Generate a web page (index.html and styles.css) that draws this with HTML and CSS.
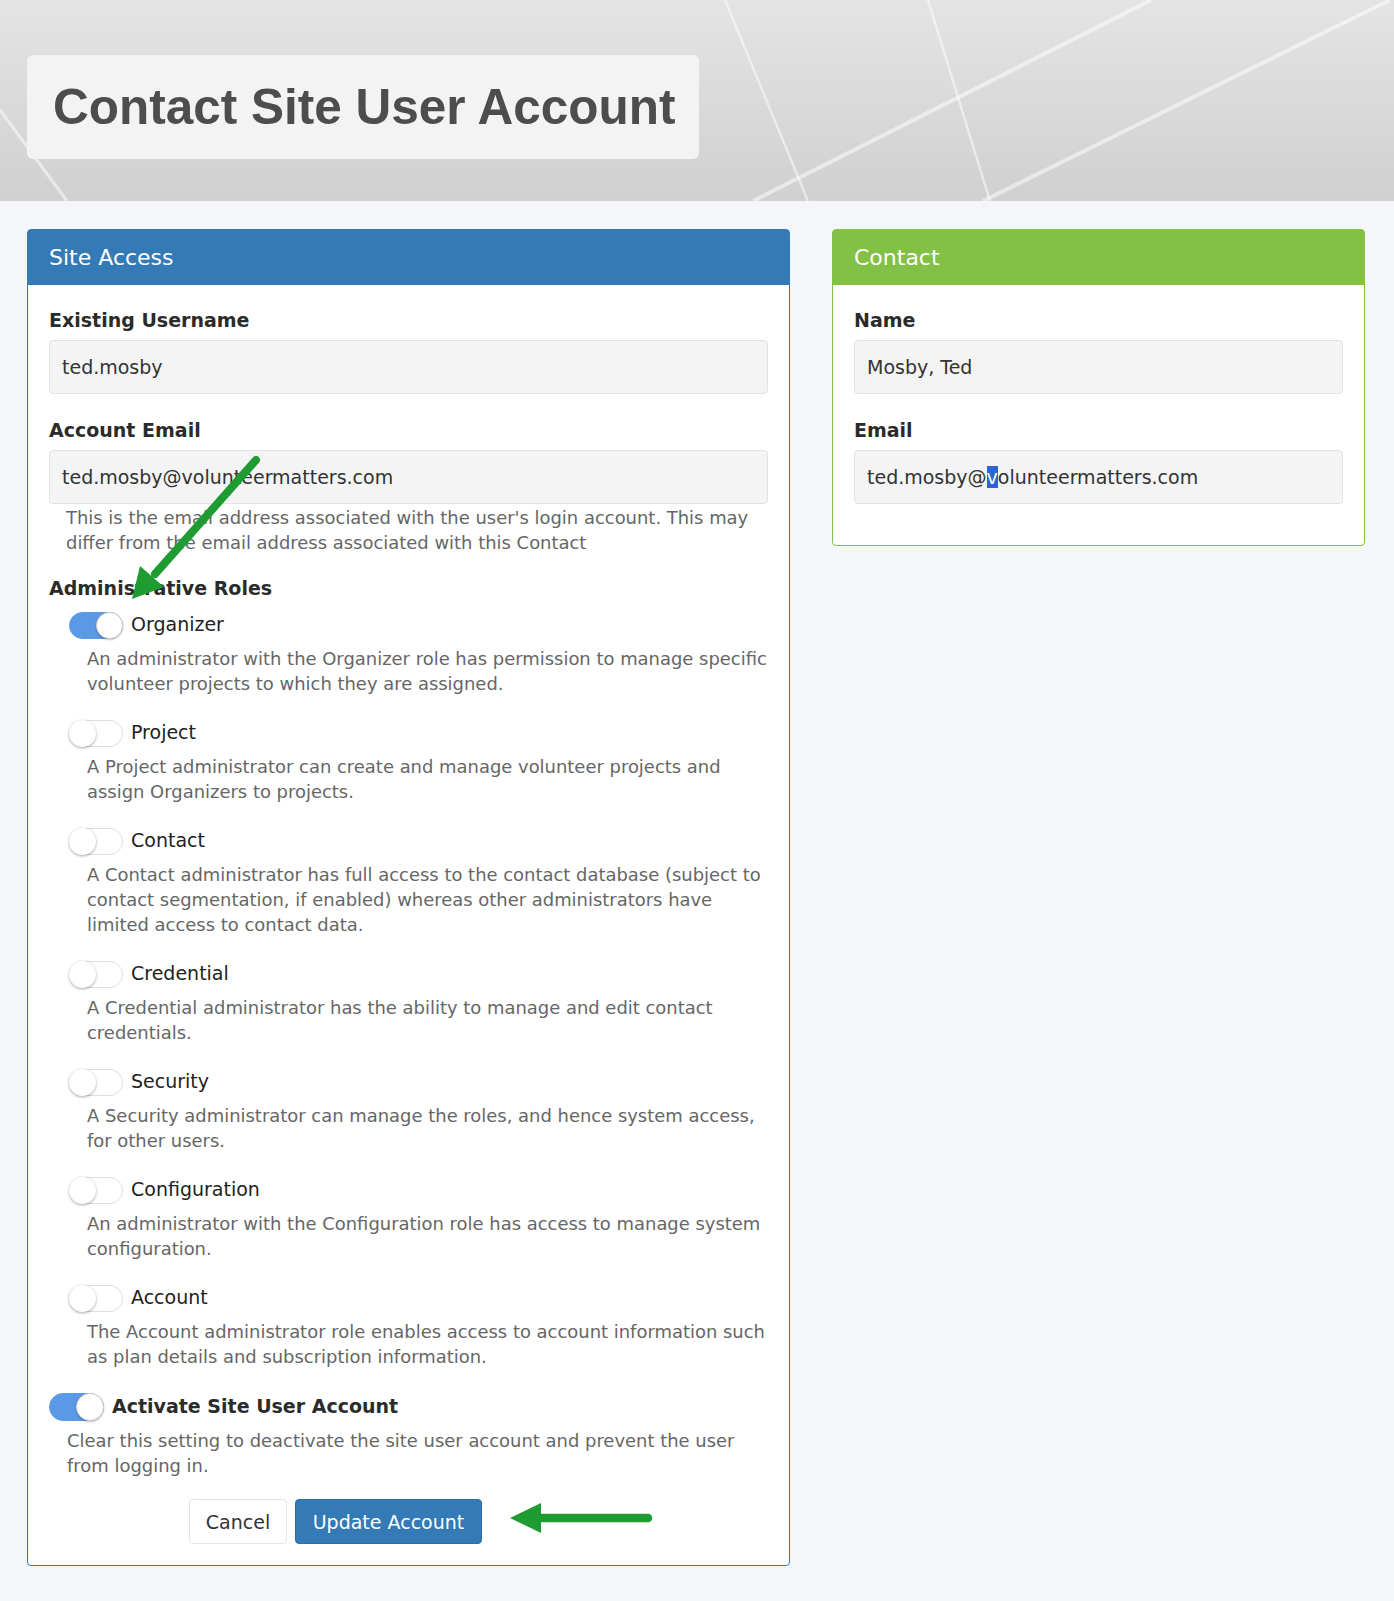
FILE: index.html
```html
<!DOCTYPE html>
<html lang="en">
<head>
    <meta charset="UTF-8">
    <meta name="viewport" content="width=device-width, initial-scale=1.0">
    <title>Contact Site User Account</title>
    <link rel="stylesheet" href="styles.css">
</head>
<body>

    <div class="banner">
        <svg class="banner-lines" viewBox="0 0 1394 201" preserveAspectRatio="none">
            <line x1="725" y1="0" x2="808" y2="201" stroke-width="2.5"/>
            <line x1="928" y1="0" x2="990" y2="201" stroke-width="2.5"/>
            <line x1="1151" y1="0" x2="753" y2="201" stroke-width="4"/>
            <line x1="1390" y1="0" x2="983" y2="201" stroke-width="4"/>
            <line x1="0" y1="110" x2="67" y2="201" stroke-width="3"/>
        </svg>
        <h1 class="page-title">Contact Site User Account</h1>
    </div>

    <div class="columns">
        <div class="panel panel-blue">
            <div class="panel-heading">Site Access</div>
            <div class="panel-body">
                <div class="group">
                    <div class="label">Existing Username</div>
                    <div class="field">ted.mosby</div>
                </div>

                <div class="group group-email">
                    <div class="label">Account Email</div>
                    <div class="field">ted.mosby@volunteermatters.com</div>
                    <p class="help help-email">This is the email address associated with the user's login account. This may differ from the email address associated with this Contact</p>
                </div>

                <div class="label label-roles">Administrative Roles</div>
                <div class="roles">
                    <div class="role">
                        <div class="switch-row"><span class="switch on"></span><span class="switch-label">Organizer</span></div>
                        <p class="help">An administrator with the Organizer role has permission to manage specific volunteer projects to which they are assigned.</p>
                    </div>
                    <div class="role">
                        <div class="switch-row"><span class="switch"></span><span class="switch-label">Project</span></div>
                        <p class="help">A Project administrator can create and manage volunteer projects and assign Organizers to projects.</p>
                    </div>
                    <div class="role">
                        <div class="switch-row"><span class="switch"></span><span class="switch-label">Contact</span></div>
                        <p class="help">A Contact administrator has full access to the contact database (subject to contact segmentation, if enabled) whereas other administrators have limited access to contact data.</p>
                    </div>
                    <div class="role">
                        <div class="switch-row"><span class="switch"></span><span class="switch-label">Credential</span></div>
                        <p class="help">A Credential administrator has the ability to manage and edit contact credentials.</p>
                    </div>
                    <div class="role">
                        <div class="switch-row"><span class="switch"></span><span class="switch-label">Security</span></div>
                        <p class="help">A Security administrator can manage the roles, and hence system access, for other users.</p>
                    </div>
                    <div class="role">
                        <div class="switch-row"><span class="switch"></span><span class="switch-label">Configuration</span></div>
                        <p class="help">An administrator with the Configuration role has access to manage system configuration.</p>
                    </div>
                    <div class="role">
                        <div class="switch-row"><span class="switch"></span><span class="switch-label">Account</span></div>
                        <p class="help">The Account administrator role enables access to account information such as plan details and subscription information.</p>
                    </div>
                </div>

                <div class="activate">
                    <div class="switch-row"><span class="switch switch-big on"></span><span class="switch-label strong">Activate Site User Account</span></div>
                    <p class="help">Clear this setting to deactivate the site user account and prevent the user from logging in.</p>
                </div>

                <div class="buttons">
                    <button class="btn btn-default">Cancel</button>
                    <button class="btn btn-primary">Update Account</button>
                </div>
            </div>
        </div>

        <div class="side">
            <div class="panel panel-green">
                <div class="panel-heading">Contact</div>
                <div class="panel-body panel-body-contact">
                    <div class="group">
                        <div class="label">Name</div>
                        <div class="field">Mosby, Ted</div>
                    </div>
                    <div class="group">
                        <div class="label">Email</div>
                        <div class="field">ted.mosby@<span class="sel">v</span>olunteermatters.com</div>
                    </div>
                </div>
            </div>
        </div>
    </div>

    <!-- callout arrows drawn over the form -->
    <svg class="arrows" viewBox="0 0 1394 1601">
        <line x1="256" y1="460" x2="155" y2="574" stroke="#1f9c31" stroke-width="8" stroke-linecap="round"/>
        <polygon points="132,599 140,566 164,587" fill="#1f9c31"/>
        <line x1="535" y1="1518" x2="648" y2="1518" stroke="#1f9c31" stroke-width="8.5" stroke-linecap="round"/>
        <polygon points="510,1518 541,1503 541,1533" fill="#1f9c31"/>
    </svg>

</body>
</html>
```

FILE: styles.css
```css
body { margin: 0; background: #f5f6fa; font-family: "DejaVu Sans", Verdana, sans-serif; color: #333; position: relative; min-height: 1601px; }

.banner { position: relative; height: 201px; padding: 55px 0 0 27px; box-sizing: border-box; background: linear-gradient(#e4e4e4, #d0d0d0); overflow: hidden; }
.banner-lines { position: absolute; top: 0; left: 0; width: 100%; height: 100%; stroke: rgba(255, 255, 255, 0.5); }
.page-title { position: relative; display: inline-block; margin: 0; padding: 25px 23px 25px 26px; font-family: "Liberation Sans", Arial, sans-serif; font-size: 49.5px; line-height: 54px; font-weight: bold; color: #4d4d4d; background: #f3f3f3; border-radius: 6px; }

.columns { display: grid; grid-template-columns: 763px 533px; gap: 42px; padding: 28px 29px 0 27px; align-items: start; }

.panel { background: #fff; border: 1px solid; border-radius: 4px; }
.panel-blue { border-color: #337ab7; }
.panel-green { border-color: #82c146; }
.panel-heading { height: 55px; padding: 0 21px; font-size: 22px; line-height: 55px; color: #fff; }
.panel-blue .panel-heading { background: #337ab7; }
.panel-green .panel-heading { background: #82c146; }
.panel-body { padding: 22px 21px 21px; }
.panel-body-contact { padding-bottom: 41px; }

.group { margin-bottom: 23px; }
.group:last-child { margin-bottom: 0; }
.group-email { margin-bottom: 20px; }
.label { font-size: 19px; line-height: 26px; font-weight: bold; color: #2b2b2b; margin-bottom: 7px; }
.label-roles { margin-bottom: 11px; }
.field { height: 54px; box-sizing: border-box; display: flex; align-items: center; padding: 0 12px; font-size: 19px; color: #333; background: #f4f4f4; border: 1px solid #e2e2e2; border-radius: 4px; }
.sel { background: #2d63d4; color: #fff; }

.help { margin: 7px -8px 0 0; padding-left: 18px; font-size: 17.95px; line-height: 25px; color: #666; }
.help-email { margin-top: 1px; padding-left: 17px; }

.roles { padding-left: 20px; }
.role { margin-bottom: 24px; }
.switch-row { display: flex; align-items: center; gap: 8px; }
.switch { position: relative; width: 54px; height: 27px; box-sizing: border-box; border-radius: 14px; background: #fff; border: 1px solid #dedede; }
.switch::after { content: ""; position: absolute; top: -1px; left: -1px; width: 27px; height: 27px; box-sizing: border-box; border-radius: 50%; background: #fff; box-shadow: 0 1px 3px rgba(0, 0, 0, 0.35); }
.switch.on { background: #5a99e6; border-color: #5a99e6; }
.switch.on::after { left: auto; right: -1px; border: 1px solid #d4d4d4; box-shadow: 0 1px 2px rgba(0, 0, 0, 0.25); }
.switch-big { height: 28px; width: 55px; }
.switch-big::after { width: 28px; height: 28px; }
.switch-label { font-size: 19px; line-height: 26px; color: #222; margin-top: -3px; }
.switch-label.strong { font-weight: bold; color: #2b2b2b; margin-top: -2px; }

.buttons { display: flex; gap: 8px; margin: 21px 0 0 140px; }
.btn { height: 45px; padding: 0; font-family: inherit; font-size: 19px; border-radius: 4px; border: 1px solid; cursor: pointer; }
.btn-default { width: 98px; background: #fff; color: #333; border-color: #e4e4e4; }
.btn-primary { width: 187px; background: #337ab7; color: #fff; border-color: #2e6da4; }

.arrows { position: absolute; top: 0; left: 0; width: 1394px; height: 1601px; pointer-events: none; }
```
